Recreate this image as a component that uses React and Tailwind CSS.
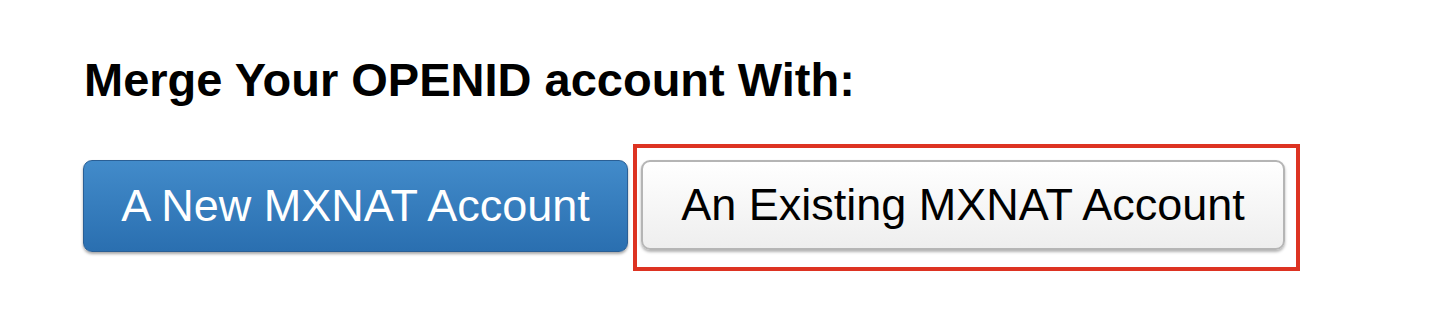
export default function App() {
  return (
    <div className="w-[1456px] h-[324px] bg-white font-['Liberation_Sans',Arial,sans-serif]">
      <div className="pl-[84px] pt-[56px]">
        <h2 className="text-[47px] leading-[48px] font-bold text-black">
          Merge Your OPENID account With:
        </h2>
      </div>
      <div className="flex items-start pl-[83px] pt-[56px]">
        <button className="w-[545px] h-[92px] rounded-[9px] border border-[#2a5f95] bg-gradient-to-b from-[#428bca] to-[#2a6fb0] text-white text-[45px] shadow-[0_2px_3px_rgba(0,0,0,0.35)]">
          A New MXNAT Account
        </button>
        <div className="ml-[5px] -mt-[16px] border-4 border-[#dd3322] pt-[12px] pl-[4px] pr-[11px] pb-[17px]">
          <button className="w-[644px] h-[90px] rounded-[9px] border-2 border-[#b5b5b5] bg-gradient-to-b from-[#ffffff] to-[#eeeeee] text-black text-[45px] shadow-[0_2px_3px_rgba(0,0,0,0.3)]">
            An Existing MXNAT Account
          </button>
        </div>
      </div>
    </div>
  );
}
